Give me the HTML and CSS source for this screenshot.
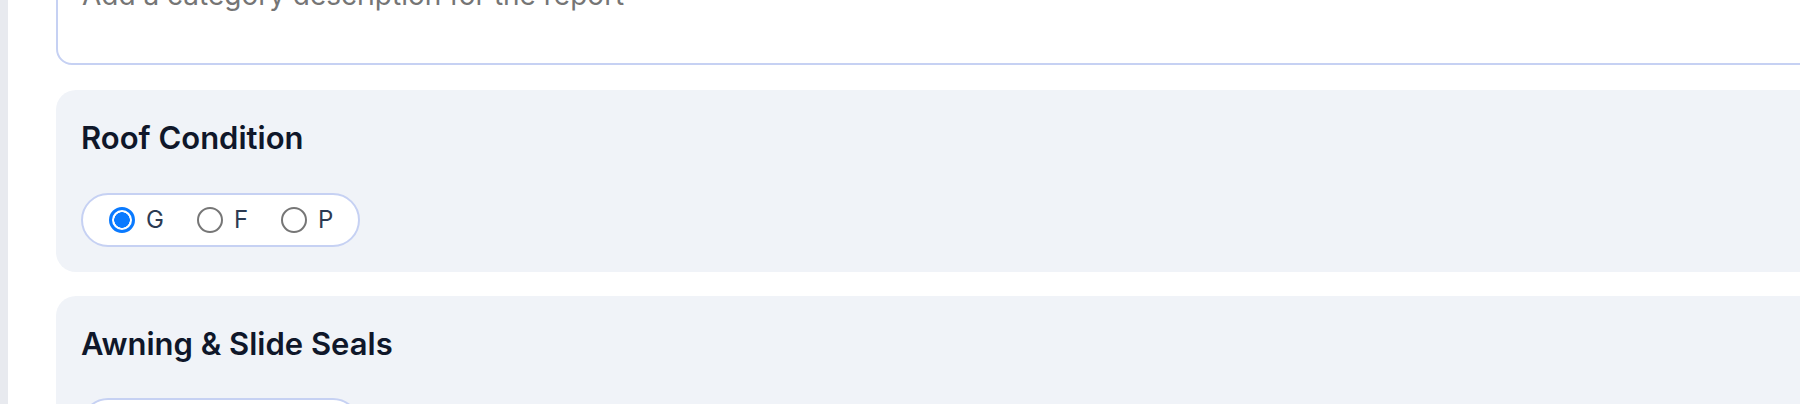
FILE: index.html
```html
<!DOCTYPE html>
<html lang="en">
<head>
<meta charset="utf-8">
<title>Inspection categories</title>
<link rel="stylesheet" href="styles.css">
</head>
<body>
<div class="layout">
  <aside class="rail"></aside>
  <main class="main">
    <div class="stack">
      <textarea class="desc" placeholder="Add a category description for the report"></textarea>

      <section class="card">
        <h3 class="card-title">Roof Condition</h3>
        <div class="choice-pill">
          <label class="choice"><input type="radio" name="roof" class="radio" checked><span>G</span></label>
          <label class="choice"><input type="radio" name="roof" class="radio"><span>F</span></label>
          <label class="choice"><input type="radio" name="roof" class="radio"><span>P</span></label>
        </div>
      </section>

      <section class="card">
        <h3 class="card-title">Awning &amp; Slide Seals</h3>
        <div class="choice-pill">
          <label class="choice"><input type="radio" name="awning" class="radio" checked><span>G</span></label>
          <label class="choice"><input type="radio" name="awning" class="radio"><span>F</span></label>
          <label class="choice"><input type="radio" name="awning" class="radio"><span>P</span></label>
        </div>
      </section>
    </div>
  </main>
</div>
</body>
</html>
```

FILE: styles.css
```css
html, body {
  margin: 0;
  padding: 0;
  height: 100%;
  overflow: hidden;
  background: #ffffff;
  font-family: Inter, "Noto Sans", "Liberation Sans", sans-serif;
}

.layout {
  display: flex;
  min-height: 100%;
}

.rail {
  flex: 0 0 8px;
  background: #e8eaef;
}

.main {
  flex: 1;
  padding-left: 48px;
}

.stack {
  width: 1820px;
  margin-top: -44px;
  display: flex;
  flex-direction: column;
  gap: 25px;
}

.desc {
  box-sizing: border-box;
  display: block;
  width: 100%;
  height: 109px;
  padding: 16px 24px;
  border: 2px solid #c6d1f3;
  border-radius: 16px;
  background: #ffffff;
  font-family: inherit;
  font-size: 28px;
  line-height: 1.5;
  color: #111827;
  resize: none;
  outline: none;
}

.desc::placeholder {
  color: #757575;
}

.card {
  background: #f0f3f8;
  border-radius: 20px;
  padding: 25px;
}

.card + .card {
  margin-top: -1px;
}

.card-title {
  margin: 0 0 31px;
  font-size: 31px;
  line-height: 1.5;
  font-weight: 600;
  color: #0f172a;
}

.choice-pill {
  display: inline-flex;
  align-items: center;
  gap: 33px;
  padding: 12px 25px 12px 26px;
  background: #ffffff;
  border: 2px solid #c6d1f3;
  border-radius: 999px;
}

.choice {
  display: inline-flex;
  align-items: center;
  gap: 11px;
  font-size: 24px;
  line-height: 26px;
  color: #2b3a52;
}

.radio {
  appearance: none;
  -webkit-appearance: none;
  box-sizing: border-box;
  margin: 0;
  width: 26px;
  height: 26px;
  border-radius: 50%;
  border: 2px solid #767676;
  background: #ffffff;
}

.radio:checked {
  border: 3px solid #0a7aff;
  background: radial-gradient(circle, #0a7aff 0 7.5px, #ffffff 8px);
}
```
